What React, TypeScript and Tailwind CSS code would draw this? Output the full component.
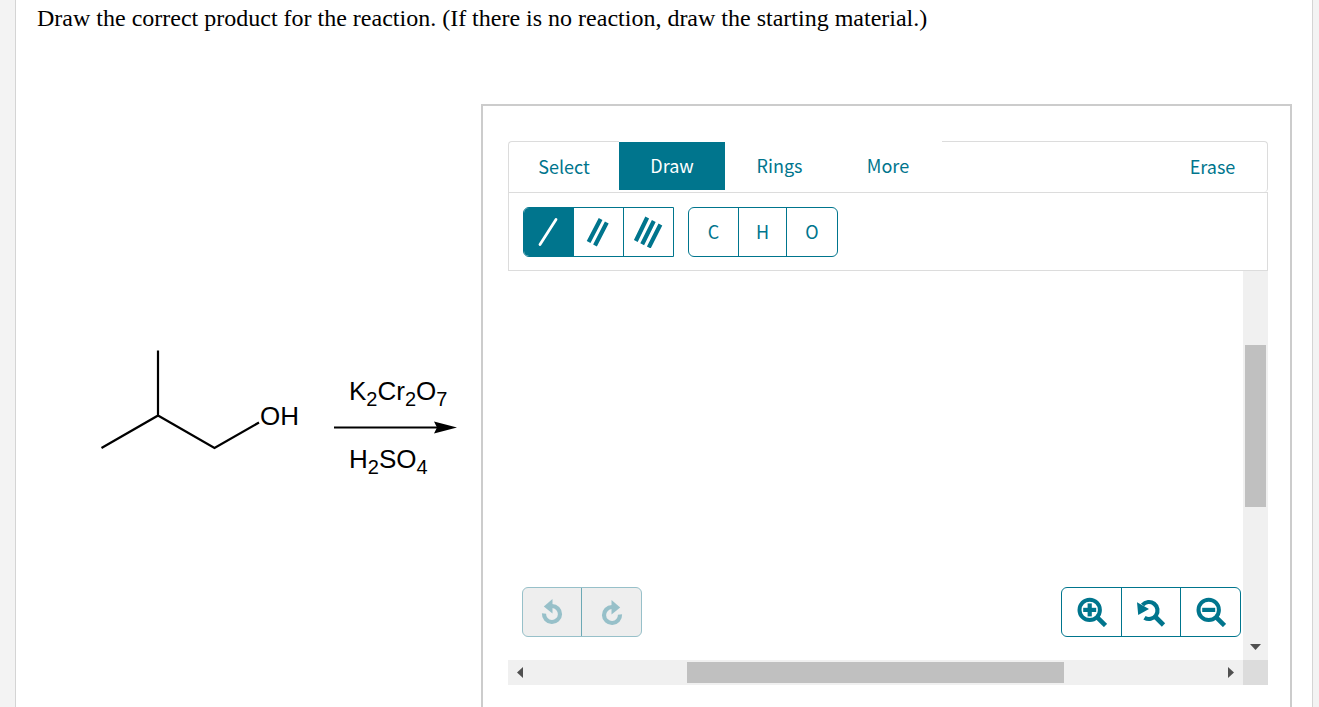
import React, { useState } from "react";

const tabFont = "font-['Noto_Sans_CJK_SC','Open_Sans',sans-serif]";

function UndoIcon({ flip = false }: { flip?: boolean }) {
  return (
    <svg width="22" height="26" viewBox="0 0 22 26" aria-hidden="true" className={flip ? "-scale-x-100" : ""}>
      <path d="M3 14.500A8 8 0 1 0 11 7" fill="none" stroke="#97c0c9" strokeWidth="4.200" />
      <path d="M2.800 7.500L11.500 0V14.500Z" fill="#97c0c9" />
    </svg>
  );
}

function ZoomIcon({ kind }: { kind: "in" | "out" }) {
  return (
    <svg width="30" height="30" viewBox="0 0 30 30" aria-hidden="true">
      <circle cx="12.700" cy="12.900" r="10.200" fill="none" stroke="#00758d" strokeWidth="4" />
      <path d="M19.500 19.700L28.500 28.500" stroke="#00758d" strokeWidth="4.600" />
      <path d="M6.200 12.900H19.200" stroke="#00758d" strokeWidth="4.200" />
      {kind === "in" && <path d="M12.700 6.400V19.400" stroke="#00758d" strokeWidth="4.200" />}
    </svg>
  );
}

function ResetIcon() {
  return (
    <svg width="30" height="30" viewBox="0 0 30 30" aria-hidden="true">
      <path d="M6.500 8A8.500 8.500 0 1 1 8.500 20.700" fill="none" stroke="#00758d" strokeWidth="4.200" />
      <path d="M1 5.200L13 12L2.200 18Z" fill="#00758d" />
      <path d="M19 19.500L27.500 28" stroke="#00758d" strokeWidth="4.600" />
    </svg>
  );
}

function BondIcon({ order }: { order: number }) {
  return (
    <svg width="32" height="32" viewBox="0 0 32 32" aria-hidden="true" stroke="currentColor">
      {order === 1 && <path d="M7 28.500L23 3.500" strokeWidth="2.800" strokeLinecap="round" />}
      {order === 2 && <path d="M5.600 26L17.600 3M12 29.500L23.800 6.500" strokeWidth="4.200" />}
      {order === 3 && <path d="M2.800 25L14.200 1.500M9.200 28.300L20.800 5M15.800 31.500L27.400 8.500" strokeWidth="4.200" />}
    </svg>
  );
}

function Reaction() {
  return (
    <svg width="368" height="140" viewBox="96 344 368 140" role="img" aria-label="2-methylpropan-1-ol treated with potassium dichromate and sulfuric acid" className="font-['Liberation_Sans',sans-serif]">
      <path d="M158 350.500V415.500L101.500 448M158 415.500L214.500 448L259 422.500" fill="none" stroke="#000" strokeWidth="2.200" />
      <path d="M334 427.500H440" stroke="#000" strokeWidth="2" />
      <path d="M434 421.500L457 427.500L434 433.500L437 427.500Z" />
      <text x="260" y="425" fontSize="26">OH</text>
      <text x="349" y="400" fontSize="26">
        K<tspan dy="6" fontSize="20">2</tspan><tspan dy="-6">Cr</tspan><tspan dy="6" fontSize="20">2</tspan><tspan dy="-6">O</tspan><tspan dy="6" fontSize="20">7</tspan>
      </text>
      <text x="349" y="468" fontSize="26">
        H<tspan dy="6" fontSize="20">2</tspan><tspan dy="-6">SO</tspan><tspan dy="6" fontSize="20">4</tspan>
      </text>
    </svg>
  );
}

const bondNames = ["Single bond", "Double bond", "Triple bond"];
const tabs = [
  { name: "Draw", width: "w-[106px]" },
  { name: "Rings", width: "w-[109px]" },
  { name: "More", width: "w-[108px]" },
];

export default function App() {
  const [tab, setTab] = useState("Draw");
  const [bond, setBond] = useState(1);

  return (
    <div className="flex min-h-screen bg-[#f3f3f3] pl-[15px] pr-1.5">
      <main className="flex flex-1 flex-col border-x border-[#d4d4d4] bg-white">
        <h1 className="h-[104px] pl-[21px] pt-1 font-['Liberation_Serif',serif] text-[24px] leading-7 text-black">
          Draw the correct product for the reaction. (If there is no reaction, draw the starting material.)
        </h1>
        <div className="flex flex-1 pr-5">
          <div className="flex w-[465px] shrink-0 justify-end pr-[17px] pt-60">
            <Reaction />
          </div>
          <section className={`flex flex-1 flex-col border-2 border-b-0 border-[#cccccc] pl-[25px] pr-[22px] pt-[35px] ${tabFont}`}>
            <nav className="flex h-[51px] text-[18px] leading-6 text-[#00758d]">
              <button className="w-[111px] rounded-tl border-l border-t border-[#dcdcdc] pb-0.5">Select</button>
              <div className="flex h-[49px] pt-px">
                {tabs.map(({ name, width }) => (
                  <button
                    key={name}
                    onClick={() => setTab(name)}
                    className={`h-12 pb-0.5 ${width} ${tab === name ? "bg-[#00758d] text-white" : ""}`}
                  >
                    {name}
                  </button>
                ))}
              </div>
              <div className="flex flex-1 justify-end rounded-r border-r border-t border-[#dcdcdc]">
                <button className="w-[109px] pb-0.5">Erase</button>
              </div>
            </nav>
            <div className="flex h-[79px] gap-3.5 border border-[#dcdcdc] px-3.5 py-3.5 text-[18px] text-[#00758d]">
              <div className="flex h-[50px] overflow-hidden rounded-l-md border border-[#00758d]">
                {[1, 2, 3].map((order) => (
                  <button
                    key={order}
                    aria-label={bondNames[order - 1]}
                    onClick={() => setBond(order)}
                    className={`flex w-[50px] items-center justify-center border-[#00758d] not-last:border-r last:w-[49px] ${bond === order ? "bg-[#00758d] text-white" : ""}`}
                  >
                    <BondIcon order={order} />
                  </button>
                ))}
              </div>
              <div className="flex h-[50px] rounded-md border border-[#00758d]">
                {["C", "H", "O"].map((atom) => (
                  <button key={atom} className="w-[50px] border-[#00758d] pb-0.5 not-last:border-r nth-2:w-12">
                    {atom}
                  </button>
                ))}
              </div>
            </div>
            <div className="flex h-[389px]">
              <div className="flex flex-1 items-end justify-between pb-[23px] pl-3.5 pr-0.5">
                <div className="flex h-[50px] rounded-md border border-[#97c0c9] bg-[#eeeeee]">
                  <button aria-label="Undo" disabled className="flex w-[59px] items-center justify-center border-r border-[#6ca9b5]">
                    <UndoIcon />
                  </button>
                  <button aria-label="Redo" disabled className="flex w-[59px] items-center justify-center pt-0.5">
                    <UndoIcon flip />
                  </button>
                </div>
                <div className="flex h-[50px] rounded-md border border-[#00758d]">
                  <button aria-label="Zoom in" className="flex w-[60px] items-center justify-center border-r border-[#00758d]"><ZoomIcon kind="in" /></button>
                  <button aria-label="Reset zoom" className="flex w-[59px] items-center justify-center border-r border-[#00758d]"><ResetIcon /></button>
                  <button aria-label="Zoom out" className="flex w-[59px] items-center justify-center"><ZoomIcon kind="out" /></button>
                </div>
              </div>
              <div className="flex w-[25px] flex-col items-center bg-[#f0f0f0] pb-px pt-[74px]">
                <div className="h-[162px] w-[21px] bg-[#c0c0c0]" />
                <button aria-label="Scroll down" className="mt-auto flex h-6 w-full items-center justify-center">
                  <svg width="11" height="6" viewBox="0 0 11 6" aria-hidden="true"><path d="M0 0H11L5.500 6Z" fill="#505050" /></svg>
                </button>
              </div>
            </div>
            <div className="flex h-[25px] items-center bg-[#f0f0f0]">
              <button aria-label="Scroll left" className="flex h-full w-6 items-center justify-center">
                <svg width="6" height="11" viewBox="0 0 6 11" aria-hidden="true"><path d="M6 0V11L0 5.500Z" fill="#505050" /></svg>
              </button>
              <div className="flex flex-1 pl-[155px]">
                <div className="h-[21px] w-[377px] bg-[#c0c0c0]" />
              </div>
              <button aria-label="Scroll right" className="flex h-full w-6 items-center justify-center">
                <svg width="6" height="11" viewBox="0 0 6 11" aria-hidden="true"><path d="M0 0V11L6 5.500Z" fill="#505050" /></svg>
              </button>
              <div className="h-full w-[25px] bg-[#dcdcdc]" />
            </div>
          </section>
        </div>
      </main>
    </div>
  );
}
